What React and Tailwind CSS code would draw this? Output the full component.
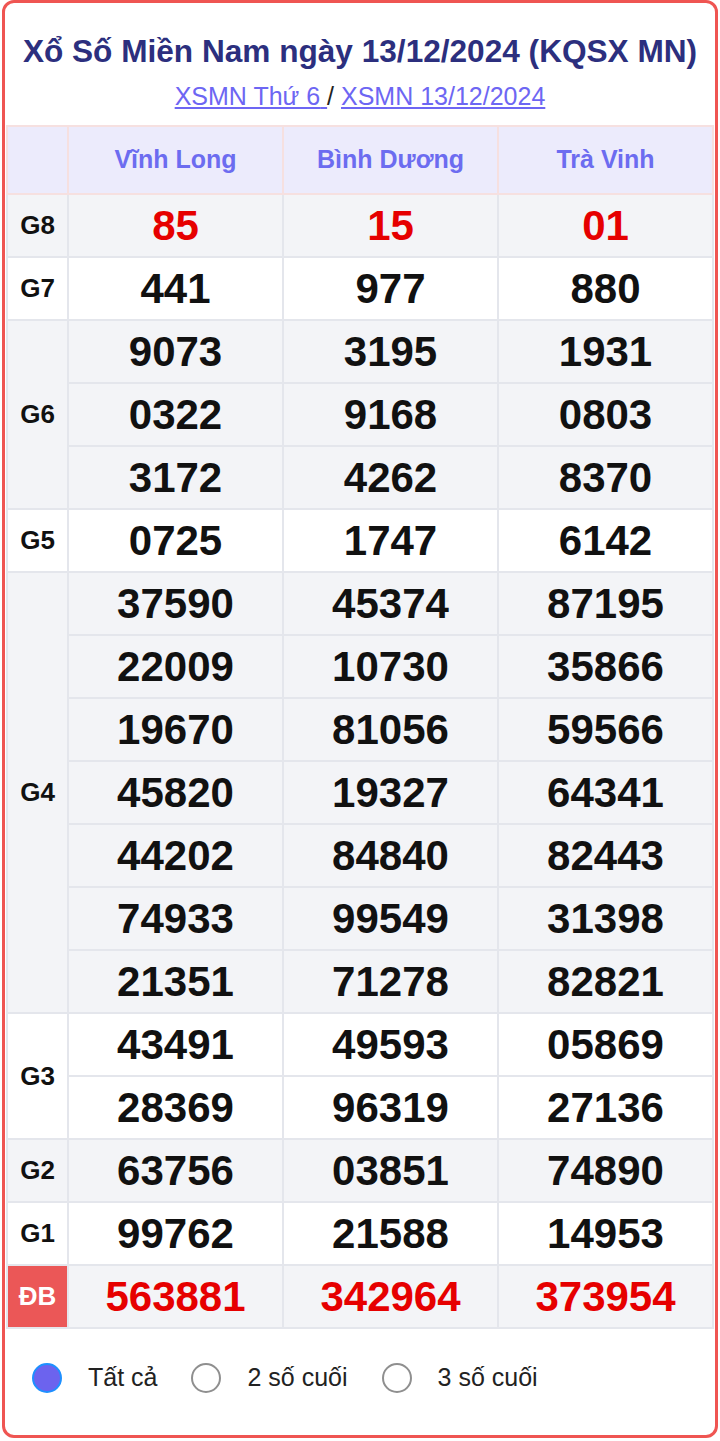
const provinces = ["Vĩnh Long", "Bình Dương", "Trà Vinh"];

const prizes = [
  { name: "G8", rows: [["85", "15", "01"]], red: true },
  { name: "G7", rows: [["441", "977", "880"]] },
  {
    name: "G6",
    rows: [
      ["9073", "3195", "1931"],
      ["0322", "9168", "0803"],
      ["3172", "4262", "8370"],
    ],
  },
  { name: "G5", rows: [["0725", "1747", "6142"]] },
  {
    name: "G4",
    rows: [
      ["37590", "45374", "87195"],
      ["22009", "10730", "35866"],
      ["19670", "81056", "59566"],
      ["45820", "19327", "64341"],
      ["44202", "84840", "82443"],
      ["74933", "99549", "31398"],
      ["21351", "71278", "82821"],
    ],
  },
  {
    name: "G3",
    rows: [
      ["43491", "49593", "05869"],
      ["28369", "96319", "27136"],
    ],
  },
  { name: "G2", rows: [["63756", "03851", "74890"]] },
  { name: "G1", rows: [["99762", "21588", "14953"]] },
  { name: "ĐB", rows: [["563881", "342964", "373954"]], red: true, special: true },
];

const Radio = ({ checked, label }) => (
  <label className="flex items-center gap-[26px]">
    <span
      className={
        checked
          ? "w-[30px] h-[30px] rounded-full bg-[#6c63ee] border-2 border-[#1e90ff]"
          : "w-[30px] h-[30px] rounded-full bg-white border-2 border-[#8f8f8f]"
      }
    />
    <span className="text-[25px] text-[#222]">{label}</span>
  </label>
);

export default function App() {
  return (
    <div className="bg-white min-h-[1441px] px-[2px] font-['Liberation_Sans',Arial,sans-serif]">
      <div className="border-[3px] border-[#ef5552] rounded-[12px] px-px pb-[40px]">
        <h1 className="text-center text-[31.6px] font-bold text-[#2c2f7e] pt-[28px] leading-[40px]">
          Xổ Số Miền Nam ngày 13/12/2024 (KQSX MN)
        </h1>
        <div className="text-center text-[25px] leading-[30px] mt-[10px] mb-[14px]">
          <a href="#" className="text-[#6d66f3] underline">
            XSMN Thứ 6{" "}
          </a>
          <span className="text-[#222]"> / </span>
          <a href="#" className="text-[#6d66f3] underline">
            XSMN 13/12/2024
          </a>
        </div>

        <table className="w-full border-collapse table-fixed">
          <colgroup>
            <col className="w-[61px]" />
            <col />
            <col />
            <col />
          </colgroup>
          <thead>
            <tr className="bg-[#ecebfc] h-[68px]">
              <th className="border-2 border-[#f6e0e0]" />
              {provinces.map((p) => (
                <th
                  key={p}
                  className="border-2 border-[#f6e0e0] text-[25px] font-bold text-[#6c6cf0]"
                >
                  {p}
                </th>
              ))}
            </tr>
          </thead>
          <tbody>
            {prizes.map((prize, pi) => {
              const bg = pi % 2 === 0 ? "bg-[#f3f4f7]" : "bg-white";
              return prize.rows.map((row, ri) => (
                <tr key={prize.name + ri} className={bg + " h-[63px]"}>
                  {ri === 0 && (
                    <td
                      rowSpan={prize.rows.length}
                      className={
                        prize.special
                          ? "border-2 border-[#e4e6ec] bg-[#eb5757] text-white text-center text-[26px] font-bold"
                          : "border-2 border-[#e4e6ec] text-center text-[26px] font-bold text-[#111]"
                      }
                    >
                      {prize.name}
                    </td>
                  )}
                  {row.map((n, ci) => (
                    <td
                      key={ci}
                      className={
                        prize.red
                          ? "border-2 border-[#e4e6ec] text-center text-[42px] font-bold text-[#e60000] leading-none"
                          : "border-2 border-[#e4e6ec] text-center text-[42px] font-bold text-[#111] leading-none"
                      }
                    >
                      {n}
                    </td>
                  ))}
                </tr>
              ));
            })}
          </tbody>
        </table>

        <div className="flex items-center gap-[34px] pl-[26px] mt-[32px] h-[34px]">
          <Radio checked label="Tất cả" />
          <Radio label="2 số cuối" />
          <Radio label="3 số cuối" />
        </div>
      </div>
    </div>
  );
}
